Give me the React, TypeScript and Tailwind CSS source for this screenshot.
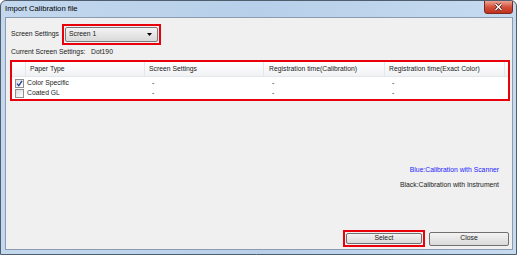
import React from "react";

const rows = [
  { name: "Color Specific", checked: true },
  { name: "Coated GL", checked: false },
];

function Check({ checked }: { checked: boolean }) {
  return (
    <div className="ml-[3px] w-[9px] h-[9px] border border-[#8e8f8f] bg-gradient-to-br from-[#dcdcdc] to-[#ffffff] flex items-center justify-center">
      {checked && (
        <svg width="7" height="7" viewBox="0 0 7 7">
          <path d="M1 3.6 L2.8 5.6 L6 0.8" fill="none" stroke="#21409a" strokeWidth="1.3" />
        </svg>
      )}
    </div>
  );
}

export default function App() {
  return (
    <div className="w-[517px] h-[255px] relative flex flex-col border border-[#4f5d6d] rounded-t-[6px] bg-gradient-to-r from-[#c3d8ee] via-[#b7cfe9] to-[#c6dbf0] font-['Liberation_Sans',Arial,sans-serif] text-black overflow-hidden">
      <div className="h-[16px] flex items-center pl-[4px] text-[7.7px] leading-none">Import Calibration file</div>
      <div className="absolute top-[-1px] right-[3px] w-[29px] h-[14px] rounded-b-[3px] border border-[#7a2a20] bg-gradient-to-b from-[#eba393] via-[#d4513b] to-[#c0301b] flex items-center justify-center">
        <svg width="9" height="8" viewBox="0 0 9 8">
          <path d="M1.5 1 L7.5 7 M7.5 1 L1.5 7" stroke="#3b1a16" strokeWidth="2.6" />
          <path d="M1.5 1 L7.5 7 M7.5 1 L1.5 7" stroke="#ffffff" strokeWidth="1.4" />
        </svg>
      </div>

      <div className="flex-1 ml-[4px] mr-[3px] mb-[4px] border border-[#8b9bb0] bg-[#f0f0f0] flex flex-col pl-[4px] pr-[3px] text-[6.8px] leading-none text-[#1a1a1a]">
        <div className="mt-[6px] flex items-center pl-[1px]">
          <div className="w-[51px]">Screen Settings</div>
          <div className="w-[99px] h-[21px] border-2 border-[#e8000b] p-[1px]">
            <div className="h-full border border-[#7a7a7a] rounded-[2px] bg-gradient-to-b from-[#f4f4f4] to-[#d9d9d9] flex items-center justify-between pl-[3px] pr-[5px]">
              <span>Screen 1</span>
              <svg width="5" height="3" viewBox="0 0 5 3">
                <path d="M0 0 H5 L2.5 3 Z" fill="#000" />
              </svg>
            </div>
          </div>
        </div>

        <div className="mt-[2px] h-[10px] flex items-center pl-[1px]">
          <span className="w-[80px]">Current Screen Settings:</span>
          <span>Dot190</span>
        </div>

        <div className="mt-[3px] w-[500px] border-2 border-[#e8000b]">
          <div className="bg-white pb-[1px]">
            <div className="h-[15px] flex items-stretch bg-gradient-to-b from-[#ffffff] to-[#f1f2f4] border-b border-[#e3e6ea]">
              <div className="w-[14px] border-r border-[#e3e6ea]" />
              <div className="w-[119px] pl-[4px] flex items-center border-r border-[#e3e6ea]">Paper Type</div>
              <div className="w-[119px] pl-[4px] flex items-center border-r border-[#e3e6ea]">Screen Settings</div>
              <div className="w-[121px] pl-[5px] flex items-center border-r border-[#e3e6ea]">Registration time(Calibration)</div>
              <div className="w-[120px] pl-[4px] flex items-center border-r border-[#e3e6ea]">Registration time(Exact Color)</div>
            </div>
            <div className="pt-[1px]">
              {rows.map((r) => (
                <div key={r.name} className="h-[10px] flex items-center">
                  <div className="w-[14px] flex items-center">
                    <Check checked={r.checked} />
                  </div>
                  <div className="w-[119px] pl-[1px]">{r.name}</div>
                  <div className="w-[119px] pl-[7px]">-</div>
                  <div className="w-[121px] pl-[8px]">-</div>
                  <div className="w-[120px] pl-[7px]">-</div>
                </div>
              ))}
            </div>
          </div>
        </div>

        <div className="mt-[64px] pr-[10px] flex flex-col items-end">
          <div className="h-[10px] flex items-center text-[#2424ff]">Blue:Calibration with Scanner</div>
          <div className="mt-[5px] h-[10px] flex items-center">Black:Calibration with Instrument</div>
        </div>

        <div className="mt-auto mb-[2px] h-[17px] flex items-center justify-end gap-[4px]">
          <div className="w-[82px] h-[17px] border-2 border-[#e8000b] p-[1px]">
            <div className="h-full border border-[#707070] rounded-[2px] bg-gradient-to-b from-[#f3f3f3] to-[#dadada] flex items-center justify-center">
              Select
            </div>
          </div>
          <div className="w-[80px] h-[14px] border border-[#707070] rounded-[2px] bg-gradient-to-b from-[#f3f3f3] to-[#dadada] flex items-center justify-center">
            Close
          </div>
        </div>
      </div>
    </div>
  );
}
